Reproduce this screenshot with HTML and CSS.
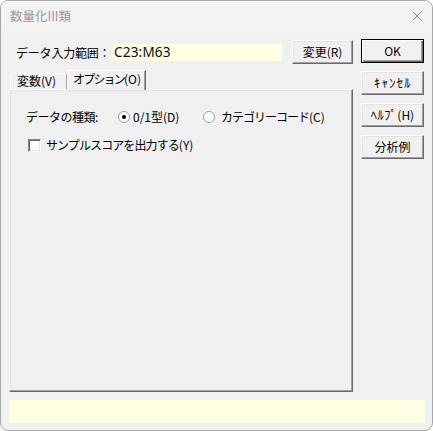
FILE: index.html
```html
<!DOCTYPE html>
<html lang="ja">
<head>
<meta charset="utf-8">
<title>数量化III類</title>
<link rel="stylesheet" href="styles.css">
</head>
<body>
<div class="window">
  <div class="titlebar">
    <span class="title">数量化III類</span>
    <svg class="close" width="10" height="10" viewBox="0 0 10 10"><path d="M0.5 0.5 L9.5 9.5 M9.5 0.5 L0.5 9.5" stroke="#8a8a8a" stroke-width="1" fill="none"/></svg>
  </div>
  <div class="body">
    <div class="main">
      <div class="leftcol">
        <div class="rangerow">
          <span class="rangelabel">データ入力範囲：</span>
          <span class="rangeinput">C23:M63</span>
          <button class="btn btn-change">変更(R)</button>
        </div>
        <div class="tabs">
          <div class="tab">変数(V)</div>
          <div class="tab tab-active"><span class="kana">オプション</span>(O)</div>
        </div>
        <div class="panel">
          <div class="typerow">
            <span class="typelabel">データの種類:</span>
            <span class="radio radio-on"></span><span class="radiotext">0/1型(D)</span>
            <span class="radio radio-off"></span><span class="radiotext"><span class="kana">カテゴリーコード</span>(C)</span>
          </div>
          <div class="checkrow">
            <span class="checkbox"></span><span class="checktext"><span class="kana">サンプルスコアを出力する</span>(Y)</span>
          </div>
        </div>
      </div>
      <div class="rightcol">
        <button class="btn btn-default">OK</button>
        <button class="btn btn-kana">ｷｬﾝｾﾙ</button>
        <button class="btn btn-help"><span class="hk">ﾍﾙﾌﾟ</span>(H)</button>
        <button class="btn">分析例</button>
      </div>
    </div>
    <div class="status"></div>
  </div>
</div>
</body>
</html>
```
FILE: styles.css
```css
html, body {
  margin: 0;
  padding: 0;
  background: #ffffff;
}
body {
  font-family: "Noto Sans CJK JP", "Noto Sans", sans-serif;
  font-size: 12px;
  color: #000;
  white-space: nowrap;
}
.window {
  width: 433px;
  height: 431px;
  box-sizing: border-box;
  border: 1px solid #a8a8a8;
  border-radius: 8px;
  background: #f0f0f0;
  overflow: hidden;
  display: flex;
  flex-direction: column;
}
.titlebar {
  height: 30px;
  flex: none;
  display: flex;
  align-items: center;
  justify-content: space-between;
  padding: 0 10px 0 9px;
  background: #f3f3f3;
}
.title {
  color: #9a9a9a;
  font-size: 12.5px;
  line-height: 14px;
}
.close {
  display: block;
  margin-top: -1px;
}
.body {
  flex: 1;
  display: flex;
  flex-direction: column;
  padding: 8px 7px 0 8px;
}
.main {
  display: flex;
  gap: 8px;
}
.leftcol {
  width: 344px;
  margin-top: 1px;
  display: flex;
  flex-direction: column;
}
.rangerow {
  height: 24px;
  display: flex;
  align-items: center;
}
.rangelabel {
  width: 96px;
  margin-left: 7px;
  line-height: 14px;
  margin-top: 1px;
  letter-spacing: -0.2px;
}
.rangeinput {
  width: 168px;
  height: 17px;
  margin-top: 1px;
  background: #ffffe1;
  padding-left: 2px;
  font-family: "Noto Sans", "Liberation Sans", sans-serif;
  font-size: 13.5px;
  line-height: 17px;
  color: #0a0a1e;
  letter-spacing: 0.2px;
}
.btn {
  box-sizing: border-box;
  font-family: "Noto Sans CJK JP", "Noto Sans", sans-serif;
  font-size: 12px;
  line-height: 14px;
  color: #000;
  background: #f0f0f0;
  border: 1px solid;
  border-color: #ffffff #696969 #696969 #ffffff;
  box-shadow: inset -1px -1px 0 #a0a0a0, inset 1px 1px 0 #e3e3e3;
  padding: 0;
  margin: 0;
  display: flex;
  align-items: center;
  justify-content: center;
  font-weight: normal;
}
.btn-change {
  width: 61px;
  height: 24px;
  margin-left: 10px;
}
.rightcol {
  width: 63px;
  display: flex;
  flex-direction: column;
  gap: 8px;
}
.rightcol .btn {
  width: 63px;
  height: 24px;
}
.rightcol .btn-kana {
  font-size: 12.5px;
  letter-spacing: 1.3px;
  padding-left: 1px;
}
.hk {
  font-size: 12.5px;
  letter-spacing: 0.5px;
}
.btn-default {
  border-color: #000;
  box-shadow: inset 1px 1px 0 #fff, inset -1px -1px 0 #696969, inset -2px -2px 0 #a0a0a0;
}
.tabs {
  margin-top: 6px;
  height: 19px;
  display: flex;
  align-items: flex-end;
  padding-left: 1px;
}
.tab {
  box-sizing: border-box;
  height: 16px;
  width: 57px;
  border-top: 1px solid #fff;
  border-left: 1px solid #fff;
  border-right: 1px solid #a0a0a0;
  padding-left: 6px;
  line-height: 14px;
  background: #f0f0f0;
}
.tab-active {
  position: relative;
  z-index: 1;
  height: 20px;
  width: 79px;
  margin-bottom: -1px;
  border-right: 1px solid #696969;
  box-shadow: inset -1px 0 0 #a0a0a0;
  padding-left: 5px;
  padding-top: 1px;
}
.kana {
  letter-spacing: -1px;
}
.tab-active .kana {
  letter-spacing: -1.8px;
}
.panel {
  box-sizing: border-box;
  height: 303px;
  border: 1px solid;
  border-color: #ffffff #696969 #696969 #ffffff;
  box-shadow: inset -1px -1px 0 #a0a0a0, inset 1px 1px 0 #e3e3e3;
  padding: 19px 0 0 16px;
}
.typerow {
  display: flex;
  align-items: center;
  height: 16px;
}
.typelabel {
  width: 92px;
  line-height: 14px;
  letter-spacing: -0.5px;
}
.radio {
  box-sizing: border-box;
  width: 12px;
  height: 12px;
  border-radius: 50%;
  border: 1px solid #a0a0a0;
  background: #fff;
  position: relative;
  flex: none;
}
.radio-on::after {
  content: "";
  position: absolute;
  left: 3px;
  top: 3px;
  width: 4px;
  height: 4px;
  border-radius: 50%;
  background: #000;
}
.radiotext {
  margin-left: 3px;
  line-height: 14px;
}
.radio-on + .radiotext {
  width: 70px;
}
.radio-off + .radiotext {
  margin-left: 6px;
}
.checkrow {
  display: flex;
  align-items: center;
  margin-top: 12px;
  margin-left: 2px;
  height: 16px;
}
.checkbox {
  box-sizing: border-box;
  width: 13px;
  height: 13px;
  border: 1px solid;
  border-color: #808080 #ffffff #ffffff #808080;
  box-shadow: inset 1px 1px 0 #696969, inset -1px -1px 0 #e3e3e3;
  background: #fff;
  flex: none;
}
.checktext {
  margin-left: 5px;
  line-height: 14px;
}
.checktext .kana {
  letter-spacing: -0.9px;
}
.status {
  margin-top: 8px;
  width: 416px;
  height: 23px;
  background: #ffffe1;
}
```
